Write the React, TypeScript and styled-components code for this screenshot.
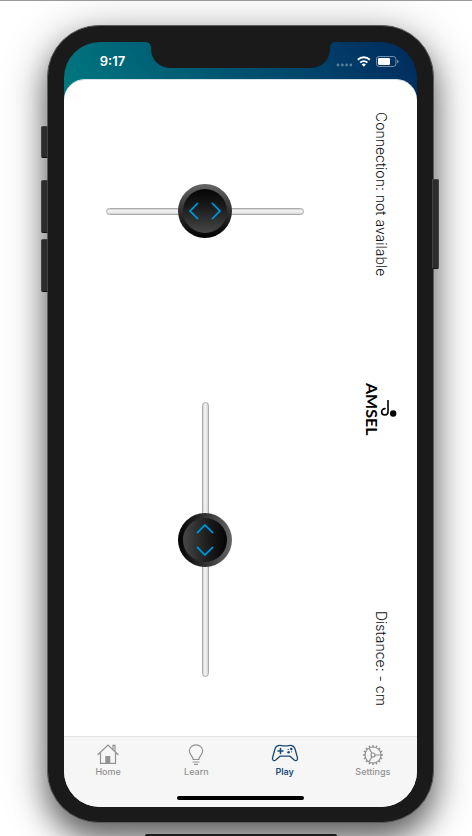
import React, { useState } from 'react';
import styled, { createGlobalStyle, css } from 'styled-components';

const GlobalStyle = createGlobalStyle`
  *, *::before, *::after { box-sizing: border-box; }
  body {
    margin: 0;
    background: #fff;
    font-family: Inter, "Liberation Sans", sans-serif;
    -webkit-font-smoothing: antialiased;
  }
`;

const Desktop = styled.div`
  display: flex;
  flex-direction: column;
  min-height: 100vh;
  overflow: hidden;
  padding: 24px 38px 0 47px;
  border-top: 1px solid #999;
`;

const Phone = styled.div`
  position: relative;
  flex: 1;
  display: flex;
  padding: 16px 16px 15px;
  border: 1px solid #5c5c5c;
  border-radius: 52px;
  background: #1a1a1a;
  box-shadow: 0 16px 30px rgba(0, 0, 0, 0.54), 0 6px 50px rgba(0, 0, 0, 0.24);
`;

const SideKey = styled.span<{ $side: 'left' | 'right'; $top: number; $length: number }>`
  position: absolute;
  ${(p) => p.$side}: ${(p) => (p.$side === 'left' ? -7 : -6)}px;
  top: ${(p) => p.$top}px;
  width: 7px;
  height: ${(p) => p.$length}px;
  border: 1px solid #444;
  border-bottom-color: #111;
  border-radius: ${(p) => (p.$side === 'left' ? '2px 0 0 2px' : '0 2px 2px 0')};
  background: #2c2c2c;
`;

const Screen = styled.div`
  flex: 1;
  min-width: 0;
  display: flex;
  flex-direction: column;
  overflow: hidden;
  border-radius: 36px;
  background: #f7f7f7 linear-gradient(50deg, #007a80 0%, #005672 45%, #003d68 75%, #002a5c 100%) top / 100% 58px no-repeat;
`;

const StatusBar = styled.header`
  display: grid;
  grid-template-columns: 1fr 179px 1fr;
  height: 37px;
`;

const Clock = styled.time`
  padding: 11px 0 0 10px;
  text-align: center;
  font-size: 13px;
  line-height: 17px;
  font-weight: 600;
  color: #fff;
`;

const Notch = styled.div`
  position: relative;
  height: 26px;
  border-radius: 0 0 19px 19px;
  background: #1a1a1a;

  &::before,
  &::after {
    content: '';
    position: absolute;
    top: 0;
    width: 4px;
    height: 4px;
  }
  &::before {
    right: 100%;
    background: radial-gradient(circle at 0 100%, transparent 3px, #1a1a1a 4px);
  }
  &::after {
    left: 100%;
    background: radial-gradient(circle at 100% 100%, transparent 3px, #1a1a1a 4px);
  }
`;

const Indicators = styled.div`
  display: flex;
  justify-content: flex-end;
  padding: 13px 18px 0 0;
`;

const Sheet = styled.main`
  flex: 1;
  display: grid;
  grid-template-columns: 4fr 1fr;
  border-top: 1px solid #d4e2e8;
  border-radius: 21px 21px 0 0;
  background: #fff;
`;

const Controls = styled.section`
  display: flex;
  flex-direction: column;
  align-items: center;
  justify-content: space-between;
  padding: 104px 0 59px;
`;

const Readouts = styled.aside`
  display: grid;
  grid-template-rows: 1fr auto 1fr;
  justify-items: center;
  padding: 32px 2px 30px 0;
`;

const Readout = styled.p<{ $end?: boolean }>`
  margin: 0;
  align-self: ${(p) => (p.$end ? 'end' : 'start')};
  writing-mode: vertical-rl;
  white-space: nowrap;
  font-size: 14px;
  line-height: 18px;
  font-weight: 300;
  color: #111;
`;

const Logo = styled.div`
  display: flex;
  align-items: center;
`;

const LogoName = styled.span`
  writing-mode: vertical-rl;
  font-family: Lato, Inter, sans-serif;
  font-size: 16px;
  line-height: 16px;
  font-weight: 700;
  color: #000;
`;

const SliderBox = styled.label<{ $vertical?: boolean }>`
  position: relative;
  display: flex;
  ${(p) =>
    p.$vertical
      ? css`
          width: 54px;
          height: 275px;
        `
      : css`
          width: 70%;
          height: 54px;
        `}
`;

const trackStyle = css<{ $vertical?: boolean }>`
  border: 1px solid #aaa;
  border-radius: 4px;
  background: linear-gradient(${(p) => (p.$vertical ? '90deg' : '180deg')}, #cfcfcf, #f2f2f2 35%, #ececec 65%, #cfcfcf);
`;

const RangeInput = styled.input<{ $vertical?: boolean }>`
  appearance: none;
  width: 100%;
  height: 100%;
  margin: 0;
  background: transparent;
  writing-mode: ${(p) => (p.$vertical ? 'vertical-lr' : 'horizontal-tb')};

  &::-webkit-slider-runnable-track {
    ${trackStyle}
    block-size: 7px;
    inline-size: 100%;
  }
  &::-webkit-slider-thumb {
    appearance: none;
    box-sizing: border-box;
    width: 54px;
    height: 54px;
    ${(p) => (p.$vertical ? 'margin-left: -25px;' : 'margin-top: -25px;')}
    border: 5px solid transparent;
    border-radius: 50%;
    background:
      linear-gradient(${(p) => (p.$vertical ? '270deg' : '180deg')}, #050505, #1a1a1a 40%, #474747) padding-box,
      linear-gradient(${(p) => (p.$vertical ? '270deg' : '180deg')}, #666, #2c2c2c 55%, #000) border-box;
  }
`;

const Chevrons = styled.svg<{ $vertical?: boolean }>`
  position: absolute;
  ${(p) => (p.$vertical ? 'left: 0;' : 'top: 0;')}
  pointer-events: none;
  overflow: visible;
  filter: drop-shadow(0 0 1px #004a80);
`;

const TabBar = styled.nav`
  display: grid;
  grid-template-columns: repeat(4, 1fr);
  border-top: 1px solid #e2e2e2;
  background: #f6f6f6;
`;

const Tab = styled.button<{ $active?: boolean }>`
  display: flex;
  flex-direction: column;
  align-items: center;
  padding: 5px 0 0;
  border: 0;
  background: none;
  font: inherit;
  font-size: 9px;
  line-height: 12px;
  font-weight: ${(p) => (p.$active ? 600 : 500)};
  color: ${(p) => (p.$active ? '#164a7c' : '#929292')};
`;

const HomeStrip = styled.div`
  display: flex;
  justify-content: center;
  padding: 18px 0 7px;
  background: #f6f6f6;
`;

const HomeIndicator = styled.span`
  width: 36%;
  height: 4px;
  border-radius: 2px;
  background: #000;
`;

const NextWindow = styled.div`
  position: relative;
  width: 192px;
  height: 2px;
  margin: 11px auto 0;
  border-radius: 3px 3px 0 0;
  background: #1c1c1c;
`;

function StatusIcons() {
  return (
    <svg width="63" height="14" viewBox="0 0 63 14" fill="none" aria-label="Wi-Fi on, battery 70%">
      <g fill="#fff" opacity="0.35">
        <circle cx="2" cy="10" r="1.4" />
        <circle cx="6.3" cy="10" r="1.4" />
        <circle cx="10.6" cy="10" r="1.4" />
        <circle cx="14.9" cy="10" r="1.4" />
      </g>
      <g stroke="#fff" strokeWidth="2">
        <path d="M21.800 4.800a8.600 8.600 0 0 1 12 0" />
        <path d="M24.200 7.600a5.200 5.200 0 0 1 7.200 0" />
      </g>
      <path d="M27.8 11.8l-2.1-2.3a3 3 0 0 1 4.2 0z" fill="#fff" />
      <rect x="40.5" y="1.5" width="19.4" height="10" rx="2.6" stroke="#fff" strokeOpacity="0.45" />
      <path d="M61.2 4.800v3.600c1-.3 1.400-1 1.400-1.800s-.4-1.500-1.400-1.800z" fill="#fff" fillOpacity="0.5" />
      <rect x="42" y="3" width="12" height="7" rx="1.2" fill="#fff" />
    </svg>
  );
}

function LogoMark() {
  return (
    <svg width="17" height="18" viewBox="0 0 17 18" fill="none" aria-hidden="true">
      <path d="M8 0V11.800a3.200 3.200 0 0 1-6.400 0a3.200 3.200 0 0 1 4-3.100" stroke="#000" strokeWidth="1.6" />
      <circle cx="13.200" cy="13.500" r="3.200" fill="#000" />
    </svg>
  );
}

function HomeIcon() {
  return (
    <svg width="24" height="24" viewBox="0 0 24 24" fill="none" stroke="currentColor" strokeWidth="1.2" aria-hidden="true">
      <path d="M2 12.5L12 3l10 9.5" strokeLinecap="round" />
      <path d="M4.5 10.5V21.3h15V10.5" />
      <path d="M17 7.5V3.3h2V9.5" />
      <path d="M9.300 14h5v7h-5z" fill="currentColor" stroke="none" />
    </svg>
  );
}

function BulbIcon() {
  return (
    <svg width="24" height="24" viewBox="0 0 24 24" fill="none" stroke="currentColor" strokeWidth="1.2" strokeLinecap="round" aria-hidden="true">
      <path d="M9.2 17.5C9.2 14 5.300 13 5.300 9a6.700 6.200 0 0 1 13.400 0c0 4-3.900 5-3.900 8.500z" />
      <path d="M9 20h6M10.500 22.400h3" />
    </svg>
  );
}

function GamepadIcon() {
  return (
    <svg width="28" height="24" viewBox="0 0 28 24" fill="none" stroke="currentColor" strokeWidth="1.3" strokeLinecap="round" strokeLinejoin="round" aria-hidden="true">
      <path d="M8 3.500c1.500-.6 2.500.3 4 .3h4c1.500 0 2.500-.9 4-.3 2.300.2 3.400 1 4.200 4l2.300 8.500c.4 2-1.300 3.300-3 2.300L19 14.200H9l-4.500 4.100c-1.700 1-3.400-.3-3-2.300L3.800 7.500c.8-3 1.900-3.800 4.200-4z" />
      <path d="M9.500 6.500v5M7 9h5" strokeWidth="1.6" />
      <g fill="currentColor" stroke="none">
        <circle cx="20.300" cy="7" r="1.300" />
        <circle cx="17.600" cy="10.300" r="1.300" />
        <circle cx="17.200" cy="7.400" r="0.600" />
        <circle cx="20.600" cy="9.800" r="0.600" />
      </g>
    </svg>
  );
}

function GearIcon() {
  const teeth = Array.from({ length: 16 }, (_, i) => i * 22.5);
  return (
    <svg width="24" height="24" viewBox="0 0 24 24" fill="none" stroke="currentColor" strokeWidth="1.2" aria-hidden="true">
      <circle cx="12" cy="13" r="8" />
      <circle cx="12" cy="13" r="2" />
      <path d="M14 13h6M11 11.200L8 6.100M11 14.800L8 19.900" />
      {teeth.map((angle) => (
        <path key={angle} d="M12 5.200V3" strokeWidth="1.5" transform={`rotate(${angle} 12 13)`} />
      ))}
    </svg>
  );
}

function Joystick({ label, vertical }: { label: string; vertical?: boolean }) {
  const [value, setValue] = useState(50);
  const offset = `calc((100% - 54px) * ${value / 100})`;
  return (
    <SliderBox $vertical={vertical}>
      <RangeInput
        type="range"
        aria-label={label}
        $vertical={vertical}
        value={value}
        onChange={(e) => setValue(Number(e.target.value))}
      />
      <Chevrons
        $vertical={vertical}
        style={vertical ? { top: offset } : { left: offset }}
        width="54"
        height="54"
        viewBox="0 0 54 54"
        fill="none"
        stroke="#00a6e0"
        strokeWidth="1.4"
        aria-hidden="true"
      >
        {vertical ? (
          <path d="M19 20l8-8 8 8M19 34l8 8 8-8" />
        ) : (
          <path d="M20 19l-8 8 8 8M34 19l8 8-8 8" />
        )}
      </Chevrons>
    </SliderBox>
  );
}

const tabs = [
  { name: 'Home', Icon: HomeIcon },
  { name: 'Learn', Icon: BulbIcon },
  { name: 'Play', Icon: GamepadIcon },
  { name: 'Settings', Icon: GearIcon },
];

export default function App() {
  const [active, setActive] = useState('Play');
  return (
    <>
      <GlobalStyle />
      <Desktop>
        <Phone>
          <SideKey $side="left" $top={100} $length={32} />
          <SideKey $side="left" $top={154} $length={53} />
          <SideKey $side="left" $top={213} $length={53} />
          <SideKey $side="right" $top={153} $length={90} />
          <Screen>
            <StatusBar>
              <Clock>9:17</Clock>
              <Notch />
              <Indicators>
                <StatusIcons />
              </Indicators>
            </StatusBar>
            <Sheet>
              <Controls>
                <Joystick label="Steering" />
                <Joystick label="Speed" vertical />
              </Controls>
              <Readouts>
                <Readout>Connection: not available</Readout>
                <Logo>
                  <LogoName>AMSEL</LogoName>
                  <LogoMark />
                </Logo>
                <Readout $end>Distance: - cm</Readout>
              </Readouts>
            </Sheet>
            <TabBar>
              {tabs.map(({ name, Icon }) => (
                <Tab key={name} type="button" $active={name === active} onClick={() => setActive(name)}>
                  <Icon />
                  {name}
                </Tab>
              ))}
            </TabBar>
            <HomeStrip>
              <HomeIndicator />
            </HomeStrip>
          </Screen>
        </Phone>
        <NextWindow />
      </Desktop>
    </>
  );
}
